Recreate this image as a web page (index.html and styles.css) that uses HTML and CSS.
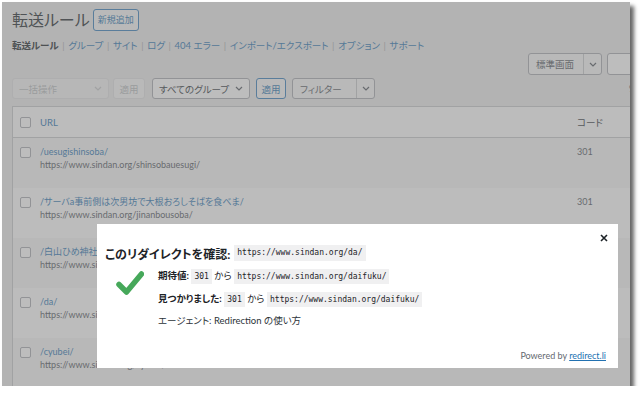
FILE: index.html
```html
<!DOCTYPE html>
<html lang="ja">
<head>
<meta charset="utf-8">
<title>転送ルール</title>
<link rel="stylesheet" href="styles.css">
</head>
<body>
<div class="shot">
  <div class="page">
    <div class="head">
      <h1>転送ルール</h1>
      <a class="add">新規追加</a>
    </div>
    <ul class="subnav">
      <li class="current">転送ルール</li><li class="sep">|</li>
      <li><a>グループ</a></li><li class="sep">|</li>
      <li><a>サイト</a></li><li class="sep">|</li>
      <li><a>ログ</a></li><li class="sep">|</li>
      <li><a>404 エラー</a></li><li class="sep">|</li>
      <li><a>インポート/エクスポート</a></li><li class="sep">|</li>
      <li><a>オプション</a></li><li class="sep">|</li>
      <li><a>サポート</a></li>
    </ul>
    <div class="viewrow">
      <div class="split view">
        <span class="lbl">標準画面</span>
        <span class="dd"><svg width="8" height="5" viewBox="0 0 8 5"><path d="M1 1l3 3 3-3" fill="none" stroke="#686b6f" stroke-width="1.2"/></svg></span>
      </div>
      <div class="search"></div>
    </div>
    <div class="filters">
      <div class="sel disabled bulk"><span>一括操作</span><svg width="8" height="5" viewBox="0 0 8 5"><path d="M1 1l3 3 3-3" fill="none" stroke="#a1a2a3" stroke-width="1.2"/></svg></div>
      <div class="btn disabled">適用</div>
      <div class="sel groups"><span>すべてのグループ</span><svg width="8" height="5" viewBox="0 0 8 5"><path d="M1 1l3 3 3-3" fill="none" stroke="#686b6f" stroke-width="1.2"/></svg></div>
      <div class="btn primary">適用</div>
      <div class="split filter">
        <span class="lbl">フィルター</span>
        <span class="dd"><svg width="8" height="5" viewBox="0 0 8 5"><path d="M1 1l3 3 3-3" fill="none" stroke="#686b6f" stroke-width="1.2"/></svg></span>
      </div>
      <span class="pct">%</span>
    </div>
    <div class="table">
      <div class="trow thead">
        <span class="cb"></span>
        <a class="colurl">URL</a>
        <span class="colcode">コード</span>
      </div>
      <div class="trow item odd">
        <span class="cb"></span>
        <div class="cell"><a class="src">/uesugishinsoba/</a><div class="dst">https://www.sindan.org/shinsobauesugi/</div></div>
        <span class="code">301</span>
      </div>
      <div class="trow item">
        <span class="cb"></span>
        <div class="cell"><a class="src">/サーバa事前側は次男坊で大根おろしそばを食べま/</a><div class="dst">https://www.sindan.org/jinanbousoba/</div></div>
        <span class="code">301</span>
      </div>
      <div class="trow item odd">
        <span class="cb"></span>
        <div class="cell"><a class="src">/白山ひめ神社の近くのおそば屋さん/</a><div class="dst">https://www.sindan.org/hakusansoba/</div></div>
        <span class="code">301</span>
      </div>
      <div class="trow item">
        <span class="cb"></span>
        <div class="cell"><a class="src">/da/</a><div class="dst">https://www.sindan.org/daifuku/</div></div>
        <span class="code">301</span>
      </div>
      <div class="trow item odd">
        <span class="cb"></span>
        <div class="cell"><a class="src">/cyubei/</a><div class="dst">https://www.sindan.org/cyubei/</div></div>
        <span class="code">301</span>
      </div>
    </div>
  </div>
  <div class="dialog">
    <div class="close"><svg width="8" height="8" viewBox="0 0 8 8"><path d="M1 1l6 6M7 1l-6 6" stroke="#1d2327" stroke-width="1.6"/></svg></div>
    <div class="mhead">
      <span class="mtitle">このリダイレクトを確認:</span>
      <code>https://www.sindan.org/da/</code>
    </div>
    <div class="mbody">
      <div class="check">
        <svg width="28" height="24" viewBox="0 0 28 24"><path d="M3 13.5l7.5 7.5L25.5 3" fill="none" stroke="#46a85a" stroke-width="5.5" stroke-linecap="round" stroke-linejoin="round"/></svg>
      </div>
      <div class="lines">
        <p><strong>期待値:</strong> <code>301</code> から <code>https://www.sindan.org/daifuku/</code></p>
        <p><strong>見つかりました:</strong> <code>301</code> から <code>https://www.sindan.org/daifuku/</code></p>
        <p class="agent">エージェント: Redirection の使い方</p>
      </div>
    </div>
    <div class="mfoot">Powered by <a>redirect.li</a></div>
  </div>
</div>
</body>
</html>
```

FILE: styles.css
```css
html, body {
  margin: 0;
  padding: 0;
  background-color: #ffffff;
}

body {
  font-family: "Lato", "Noto Sans CJK JP", sans-serif;
  font-feature-settings: "palt";
  color: #4e5153;
}

.shot {
  position: relative;
  width: 628px;
  height: 384px;
  margin: 2px 0 0 2px;
  overflow: hidden;
  background-color: #a9a9a9;
  box-shadow: 4px 4px 4px rgba(0, 0, 0, 0.6);
}

.page {
  width: 648px;
  padding-left: 10px;
  box-sizing: border-box;
  background-color: #b3b3b3;
  min-height: 384px;
}

a {
  color: #557997;
  text-decoration: none;
}

.head {
  display: flex;
  align-items: center;
  gap: 3px;
  padding-top: 7px;
  height: 22px;
}

.head h1 {
  margin: 0;
  font-size: 16px;
  font-weight: 400;
  line-height: 22px;
  color: #505356;
  white-space: nowrap;
}

.add {
  display: block;
  height: 20px;
  line-height: 20px;
  padding: 0 4px;
  font-size: 9px;
  border: 1px solid #5a7d9b;
  border-radius: 3px;
  background-color: #b9b9b9;
  color: #557997;
  white-space: nowrap;
}

.subnav {
  display: flex;
  list-style: none;
  margin: 8px 0 0;
  padding: 0;
  font-size: 9.5px;
  line-height: 14px;
  white-space: nowrap;
}

.subnav .current {
  font-weight: 700;
  color: #4e5153;
}

.subnav .sep {
  color: #939596;
  margin: 0 3.6px;
}

.viewrow {
  display: flex;
  justify-content: flex-end;
  gap: 5px;
  height: 22px;
}

.split {
  display: flex;
  align-items: stretch;
  box-sizing: border-box;
  border: 1px solid #929396;
  border-radius: 3px;
  background-color: #b9b9b9;
  font-size: 9.5px;
  color: #686b6f;
  white-space: nowrap;
}

.split .lbl {
  flex: 1;
  display: flex;
  align-items: center;
  padding: 0 7px;
}

.split .dd {
  display: flex;
  align-items: center;
  justify-content: center;
  width: 17px;
  border-left: 1px solid #a1a2a3;
}

.view {
  width: 74px;
}

.search {
  width: 43px;
  box-sizing: border-box;
  border: 1px solid #929396;
  border-radius: 3px;
  background-color: #bdbdbd;
}

.filters {
  display: flex;
  align-items: stretch;
  gap: 6px;
  height: 21px;
  margin-top: 3px;
  font-size: 9.5px;
  white-space: nowrap;
}

.sel {
  display: flex;
  align-items: center;
  justify-content: space-between;
  box-sizing: border-box;
  padding: 0 6px 0 6px;
  border: 1px solid #929396;
  border-radius: 3px;
  background-color: #bdbdbd;
  color: #56595c;
}

.sel.disabled {
  border-color: #aeaeaf;
  background-color: #b7b7b7;
  color: #9a9c9d;
}

.bulk {
  width: 97px;
}

.groups {
  width: 98px;
}

.btn {
  display: flex;
  align-items: center;
  justify-content: center;
  box-sizing: border-box;
  border: 1px solid #5a7d9b;
  border-radius: 3px;
  background-color: #b9b9b9;
  color: #557997;
}

.btn.disabled {
  width: 32px;
  margin-left: -2px;
  margin-right: 1px;
  border-color: #aeaeaf;
  color: #9a9c9d;
}

.btn.primary {
  width: 30px;
}

.filter {
  width: 83px;
}

.pct {
  margin-left: auto;
  width: 21px;
  display: flex;
  align-items: center;
  color: #686b6f;
}

.table {
  margin-top: 7px;
  border: 1px solid #a1a2a3;
  background-color: #bcbcbc;
}

.trow {
  display: grid;
  grid-template-columns: 27px 537px 1fr;
  box-sizing: border-box;
}

.thead {
  height: 31px;
  align-items: center;
  border-bottom: 1px solid #a1a2a3;
  font-size: 9.5px;
}

.cb {
  display: block;
  width: 11px;
  height: 11px;
  margin-left: 7px;
  box-sizing: border-box;
  border: 1px solid #929396;
  border-radius: 2px;
  background-color: #bdbdbd;
}

.colcode {
  color: #56595c;
}

.item {
  height: 50px;
  padding-top: 7px;
  align-items: start;
  font-size: 9px;
  line-height: 13px;
  white-space: nowrap;
}

.item.odd {
  background-color: #b8b8b8;
}

.item .cb {
  margin-top: 2px;
}

.src {
  display: block;
}

.dst {
  color: #686b6f;
}

.code {
  color: #686b6f;
}

.dialog {
  position: absolute;
  left: 95px;
  top: 222px;
  width: 521px;
  height: 144px;
  box-sizing: border-box;
  padding: 19px 12px 6px 8px;
  background-color: #ffffff;
  display: flex;
  flex-direction: column;
  color: #1d2327;
}

.dialog a {
  color: #2271b1;
}

.close {
  position: absolute;
  top: 10px;
  right: 10px;
  width: 8px;
  height: 8px;
  display: flex;
}

.mhead {
  display: flex;
  align-items: center;
  gap: 4px;
  height: 20px;
  white-space: nowrap;
}

.mtitle {
  font-size: 12px;
  font-weight: 700;
}

code {
  font-family: "DejaVu Sans Mono", "Liberation Mono", monospace;
  font-size: 8px;
  line-height: 10px;
  background-color: #f0f0f1;
  padding: 3px 3px;
  color: #1d2327;
}

.mbody {
  display: flex;
  margin-top: 2px;
  padding-left: 11px;
  gap: 14px;
}

.check {
  padding-top: 6px;
  width: 28px;
}

.lines p {
  margin: 0;
  height: 22.5px;
  font-size: 9.5px;
  line-height: 22px;
  white-space: nowrap;
}

.lines strong {
  font-weight: 700;
}

.agent {
  color: #2c3338;
}

.mfoot {
  margin-top: auto;
  text-align: right;
  font-size: 9px;
  line-height: 12px;
  color: #646970;
}

.mfoot a {
  text-decoration: underline;
}
```
